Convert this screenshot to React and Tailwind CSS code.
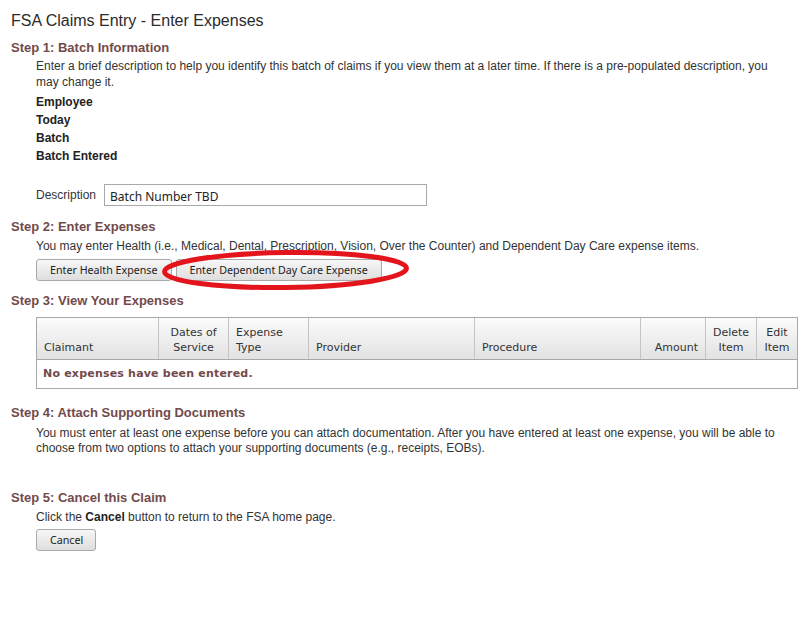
import React from 'react';

const steps = 'text-[13px] font-bold text-[#734a4a] leading-4';
const body = 'text-[12px] leading-4 text-[#333]';

function Btn({ children, className = '' }) {
  return (
    <button
      className={`h-[22px] px-[13px] border border-[#a9a9a9] rounded-[3px] bg-gradient-to-b from-[#f7f7f7] to-[#dedede] text-[10.7px] text-[#222] font-['Noto_Sans',sans-serif] leading-none ${className}`}
    >
      {children}
    </button>
  );
}

const cols = [
  { label: 'Claimant', w: 'w-[121px]', align: 'text-left' },
  { label: ['Dates of', 'Service'], w: 'w-[70px]', align: 'text-center' },
  { label: ['Expense', 'Type'], w: 'w-[80px]', align: 'text-left' },
  { label: 'Provider', w: 'w-[166px]', align: 'text-left' },
  { label: 'Procedure', w: 'w-[166px]', align: 'text-left' },
  { label: 'Amount', w: 'w-[65px]', align: 'text-right' },
  { label: ['Delete', 'Item'], w: 'w-[51px]', align: 'text-center' },
  { label: ['Edit', 'Item'], w: 'w-[42px]', align: 'text-center' },
];

export default function App() {
  return (
    <div className="w-[802px] h-[640px] bg-white pl-[11px] pt-[11px] font-['Liberation_Sans',Arial,sans-serif] text-[#333]">
      <h1 className="text-[16px] leading-5 text-[#2b2b2b]">FSA Claims Entry - Enter Expenses</h1>

      {/* Step 1 */}
      <h2 className={`${steps} mt-[9px]`}>Step 1: Batch Information</h2>
      <div className="ml-[25px] mt-[2px]">
        <p className={`${body} w-[752px]`}>
          Enter a brief description to help you identify this batch of claims if you view them at a later time. If there is a pre-populated description, you may change it.
        </p>
        <div className="mt-[4px] flex flex-col gap-[2px] text-[12px] font-bold text-[#222] leading-4">
          <div>Employee</div>
          <div>Today</div>
          <div>Batch</div>
          <div>Batch Entered</div>
        </div>
        <div className="mt-[20px] flex items-center gap-[8px]">
          <span className={body}>Description</span>
          <div className="w-[323px] h-[22px] border border-[#a9a9a9] flex items-end pb-[2px] px-[5px] text-[12px] text-[#222] font-['Noto_Sans',sans-serif] leading-none">
            Batch Number TBD
          </div>
        </div>
      </div>

      {/* Step 2 */}
      <h2 className={`${steps} mt-[13px]`}>Step 2: Enter Expenses</h2>
      <div className="ml-[25px] mt-[3px]">
        <p className={body}>
          You may enter Health (i.e., Medical, Dental, Prescription, Vision, Over the Counter) and Dependent Day Care expense items.
        </p>
        <div className="relative mt-[5px] flex gap-[4px]">
          <Btn>Enter Health Expense</Btn>
          <Btn>Enter Dependent Day Care Expense</Btn>
          <svg className="absolute left-[120px] top-[-15px] pointer-events-none" width="260" height="52" viewBox="0 0 260 52">
            <ellipse
              cx="129.5"
              cy="26"
              rx="121"
              ry="17.5"
              transform="rotate(-0.8 129.5 26)"
              fill="none"
              stroke="#e3141c"
              strokeWidth="5"
            />
          </svg>
        </div>
      </div>

      {/* Step 3 */}
      <h2 className={`${steps} mt-[12px]`}>Step 3: View Your Expenses</h2>
      <div className="ml-[25px] mt-[8px] w-[762px] border border-[#a8a8a8] font-['DejaVu_Sans',Verdana,sans-serif]">
        <div className="flex h-[42px] bg-gradient-to-b from-[#fbfbfb] to-[#e2e2e2] border-b border-[#a8a8a8] text-[11px] leading-[15px] text-[#333]">
          {cols.map((c, i) => (
            <div
              key={i}
              className={`${c.w} ${c.align} shrink-0 flex flex-col justify-end px-[7px] pb-[4px] ${i > 0 ? 'border-l border-[#c4c4c4]' : ''} ${i === cols.length - 1 ? 'flex-1' : ''}`}
            >
              {Array.isArray(c.label) ? c.label.map(l => <div key={l}>{l}</div>) : <div>{c.label}</div>}
            </div>
          ))}
        </div>
        <div className="h-[28px] flex items-center px-[6px] text-[11px] font-bold text-[#734a4a] tracking-[0.2px]">
          No expenses have been entered.
        </div>
      </div>

      {/* Step 4 */}
      <h2 className={`${steps} mt-[16px]`}>Step 4: Attach Supporting Documents</h2>
      <div className="ml-[25px] mt-[5px]">
        <p className={`${body} w-[760px] leading-[15px]`}>
          You must enter at least one expense before you can attach documentation. After you have entered at least one expense, you will be able to choose from two options to attach your supporting documents (e.g., receipts, EOBs).
        </p>
      </div>

      {/* Step 5 */}
      <h2 className={`${steps} mt-[34px]`}>Step 5: Cancel this Claim</h2>
      <div className="ml-[25px] mt-[3px]">
        <p className={body}>
          Click the <span className="font-bold text-[#222]">Cancel</span> button to return to the FSA home page.
        </p>
        <Btn className="mt-[4px] w-[60px] px-0">Cancel</Btn>
      </div>
    </div>
  );
}
